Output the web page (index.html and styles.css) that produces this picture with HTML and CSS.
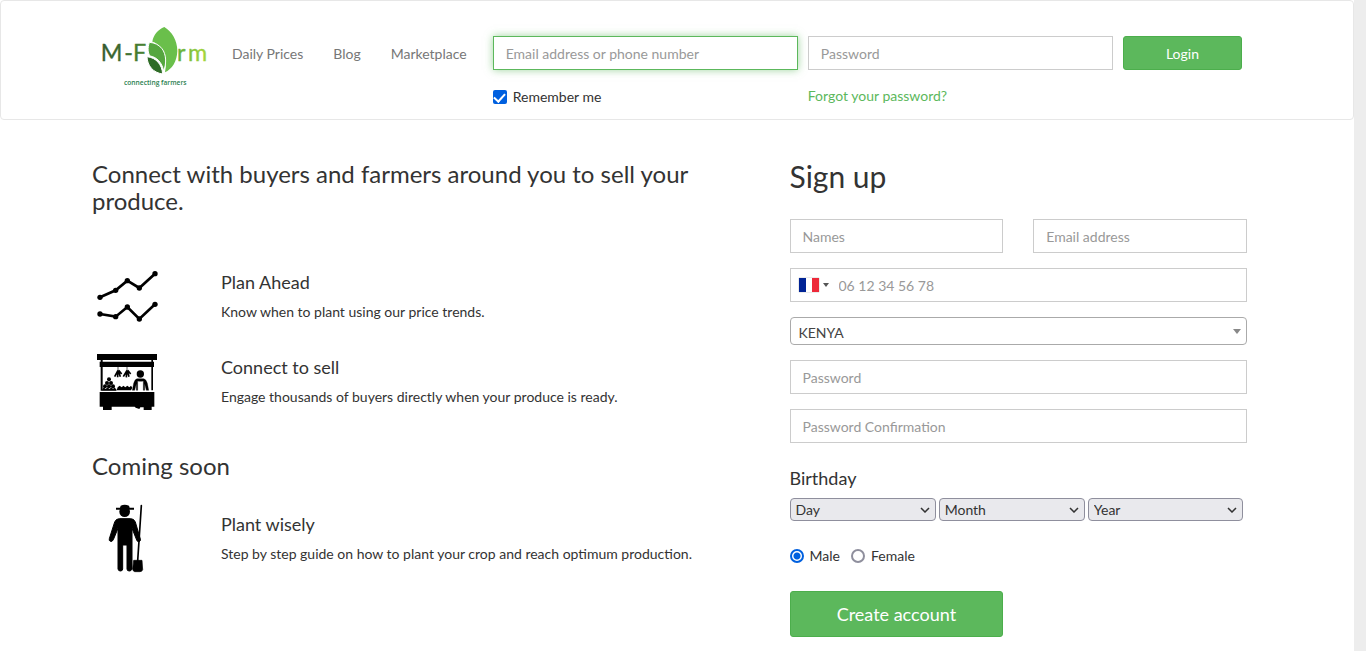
FILE: index.html
```html
<!DOCTYPE html>
<html lang="en">
<head>
    <meta charset="UTF-8">
    <meta name="viewport" content="width=device-width, initial-scale=1.0">
    <title>M-Farm</title>
    <link rel="stylesheet" href="styles.css">
</head>
<body>
    <header class="navbar">
        <div class="container navbar-inner">
            <a class="brand" href="#" aria-label="M-Farm">
                <svg width="130" height="80" viewBox="0 0 390 240">
                    <defs>
                        <linearGradient id="dark" x1="0" x2="1">
                            <stop offset="0" stop-color="#35592f"/>
                            <stop offset="1" stop-color="#4a8432"/>
                        </linearGradient>
                        <linearGradient id="light" x1="0" x2="1">
                            <stop offset="0" stop-color="#5fae3c"/>
                            <stop offset="1" stop-color="#a9d83c"/>
                        </linearGradient>
                    </defs>
                    <text class="logo-text" x="32 103 129" y="138" fill="url(#dark)" stroke="url(#dark)">M-F</text>
                    <text class="logo-text" x="261 294" y="138" fill="url(#light)" stroke="url(#light)">rm</text>
                    <path d="M223 36C204 44 190 60 187 80C206 85 223 105 227 130C229 146 227 160 225 172C246 162 261 140 262 108C262 76 246 50 223 36Z" fill="#6abf4b"/>
                    <path d="M178 82C172 100 174 114 180 123C200 126 216 142 221 168C230 145 229 118 216 101C207 89 193 83 178 82Z" fill="#55a63f" stroke="#fff" stroke-width="3"/>
                    <path d="M171 125C172 152 189 173 218 177C216 149 199 128 171 125Z" fill="#2f6c27" stroke="#fff" stroke-width="3"/>
                    <text class="logo-tagline" x="102" y="209" fill="#2b8050">connecting farmers</text>
                </svg>
            </a>
            <nav class="nav-links">
                <a href="#">Daily Prices</a>
                <a href="#">Blog</a>
                <a href="#">Marketplace</a>
            </nav>
            <form class="login-form">
                <input class="form-control active" type="text" aria-label="Email address or phone number" placeholder="Email address or phone number">
                <input class="form-control" type="password" aria-label="Password" placeholder="Password">
                <button class="btn" type="submit">Login</button>
                <label class="check"><input type="checkbox" checked> Remember me</label>
                <a class="forgot" href="#">Forgot your password?</a>
            </form>
        </div>
    </header>

    <main class="container main">
        <section class="features">
            <h2>Connect with buyers and farmers around you to sell your produce.</h2>
            <div class="feature-list">
                <div class="feature">
                    <svg width="80" height="70" viewBox="21 6 240 210" fill="none" stroke="#000" stroke-width="8">
                        <path d="M45 112L92 91L127 62L163 84L210 41M45 162L92 170L127 141L163 177L210 133"/>
                        <g fill="#000" stroke="none">
                            <circle cx="45" cy="112" r="8"/>
                            <circle cx="92" cy="91" r="8"/>
                            <circle cx="127" cy="62" r="8"/>
                            <circle cx="163" cy="84" r="8"/>
                            <circle cx="210" cy="41" r="8"/>
                            <circle cx="45" cy="162" r="8"/>
                            <circle cx="92" cy="170" r="8"/>
                            <circle cx="127" cy="141" r="8"/>
                            <circle cx="163" cy="177" r="8"/>
                            <circle cx="210" cy="133" r="8"/>
                        </g>
                    </svg>
                    <div>
                        <h4>Plan Ahead</h4>
                        <p>Know when to plant using our price trends.</p>
                    </div>
                </div>
                <div class="feature">
                    <svg width="80" height="75" viewBox="21 -3 240 225">
                        <!-- roof, posts and counter -->
                        <path d="M36 27H216V45H36ZM44 50H207V66H44ZM44 141H208V185H200V195H176V187H166L163 192L152 188L149 185H80V195H54V185H44Z"/>
                        <path d="M47 44H53V136H47ZM199 44H204V136H199ZM47 134H94V137H47Z"/>
                        <!-- fruit -->
                        <circle cx="72" cy="103" r="6"/>
                        <circle cx="66" cy="114" r="6"/>
                        <circle cx="78" cy="114" r="6"/>
                        <circle cx="60" cy="124" r="6"/>
                        <circle cx="72" cy="124" r="6"/>
                        <circle cx="84" cy="124" r="6"/>
                        <path d="M51 136L56 127L62 132L68 127L73 132L80 127L84 132L89 127L95 136ZM95 136L98 127L104 122L110 127L115 122L121 127L127 122L133 127L138 122L142 128L138 136Z"/>
                        <!-- hanging bunches -->
                        <g fill="none" stroke="#000" stroke-width="5">
                            <path d="M99 76L89 95M98 78L98 97M100 78L106 95M101 76L110 87M126 76L115 95M125 78L124 97M127 78L132 95M128 76L137 87"/>
                            <path d="M99 66V80M126 66V80" stroke-width="2"/>
                        </g>
                        <!-- seller -->
                        <circle cx="166" cy="87" r="11"/>
                        <path d="M156 101H176Q184 103 187 115L191 136H184L179 116V136H175V108H158V136H154V116L149 136H142L146 115Q149 103 156 101Z" stroke="#000" stroke-width="1"/>
                        <path d="M160 102H173V109H160Z"/>
                    </svg>
                    <div>
                        <h4>Connect to sell</h4>
                        <p>Engage thousands of buyers directly when your produce is ready.</p>
                    </div>
                </div>
            </div>
            <h2>Coming soon</h2>
            <div class="feature">
                <svg width="78" height="85" viewBox="6 3 234 255">
                    <path d="M90 38L92 32Q104 27 117 32L119 38H132V44H78V38Z"/>
                    <circle cx="104" cy="50" r="16"/>
                    <path d="M88 71H122Q132 71 136 81L151 132Q153 138 147 140Q142 141 140 135L126 100V222Q124 228 118 228Q111 228 111 222V150H98V222Q98 228 91 228Q85 228 84 222V100L70 134Q67 141 61 139Q56 137 58 131L74 81Q78 71 88 71Z" stroke="#000" stroke-width="3"/>
                    <path d="M154 32L143 198" stroke="#000" stroke-width="5" stroke-linecap="round"/>
                    <path d="M131 196H156L158 224Q156 230 150 230H134Q128 228 128 222Z" stroke="#000" stroke-width="2"/>
                </svg>
                <div>
                    <h4>Plant wisely</h4>
                    <p>Step by step guide on how to plant your crop and reach optimum production.</p>
                </div>
            </div>
        </section>

        <section class="signup">
            <h1>Sign up</h1>
            <form class="signup-form">
                <div class="half-row">
                    <input class="form-control" type="text" aria-label="Names" placeholder="Names">
                    <input class="form-control" type="email" aria-label="Email address" placeholder="Email address">
                </div>
                <div class="phone">
                    <span class="flag"></span>
                    <input class="form-control" type="tel" aria-label="Phone number" placeholder="06 12 34 56 78">
                </div>
                <div class="country">
                    <select aria-label="Country">
                        <option>KENYA</option>
                    </select>
                </div>
                <input class="form-control" type="password" aria-label="Password" placeholder="Password">
                <input class="form-control" type="password" aria-label="Password Confirmation" placeholder="Password Confirmation">
                <h4>Birthday</h4>
                <div class="birthday">
                    <div class="date-select">
                        <select aria-label="Day"><option>Day</option></select>
                        <svg width="10" height="6" viewBox="0 0 10 6"><path d="M1 1L5 5L9 1"/></svg>
                    </div>
                    <div class="date-select">
                        <select aria-label="Month"><option>Month</option></select>
                        <svg width="10" height="6" viewBox="0 0 10 6"><path d="M1 1L5 5L9 1"/></svg>
                    </div>
                    <div class="date-select">
                        <select aria-label="Year"><option>Year</option></select>
                        <svg width="10" height="6" viewBox="0 0 10 6"><path d="M1 1L5 5L9 1"/></svg>
                    </div>
                </div>
                <div class="gender">
                    <label><input type="radio" name="gender" checked> Male</label>
                    <label><input type="radio" name="gender"> Female</label>
                </div>
                <button class="btn btn-lg" type="submit">Create account</button>
            </form>
        </section>
    </main>
</body>
</html>
```
FILE: styles.css
```css
* {
    box-sizing: border-box;
}
html {
    background: #ededed;
}
body {
    margin: 0 12px 0 0;
    min-height: 100vh;
    background: #fff;
    color: #333;
    font-family: Lato, sans-serif;
    font-size: 14px;
    line-height: 20px;
    font-kerning: normal;
    text-rendering: optimizeLegibility;
}
h1, h2, h4, p {
    margin: 0;
    font-weight: 400;
}
h1 {
    font-size: 30px;
    line-height: 32px;
}
h2 {
    font-size: 24px;
    line-height: 27px;
}
h4 {
    font-size: 18px;
    line-height: 20px;
}
input, select, button {
    font-family: inherit;
    font-size: 14px;
    font-kerning: inherit;
    margin: 0;
    text-rendering: inherit;
}
a {
    color: #5cb85c;
    text-decoration: none;
}
.container {
    max-width: 1170px;
    margin: 0 auto;
}

/* top bar */
.navbar {
    border: 1px solid #e7e7e7;
    border-radius: 4px;
}
.navbar-inner {
    display: flex;
    align-items: flex-start;
    padding-right: 20px;
}
.brand {
    height: 118px;
    padding-top: 14px;
    margin-right: 12px;
    margin-left: -2px;
}
.logo-text {
    font-size: 70px;
    stroke-width: 1px;
}
.logo-tagline {
    font-family: "Open Sans", sans-serif;
    font-size: 20px;
    font-weight: 600;
}
.nav-links {
    display: flex;
    gap: 30px;
    padding-top: 43px;
}
.nav-links a {
    color: #777;
}
.login-form {
    flex: 1;
    display: grid;
    grid-template-columns: 305fr 305fr 119fr;
    column-gap: 10px;
    row-gap: 16px;
    padding-top: 35px;
    margin-left: 26px;
}
.form-control {
    display: block;
    width: 100%;
    height: 34px;
    padding: 6px 12px;
    border: 1px solid #ccc;
    border-radius: 0;
    background: #fff;
    color: #555;
    outline: none;
}
.form-control::placeholder {
    color: #999;
}
.form-control.active {
    border-color: #5cb85c;
    box-shadow: 0 0 8px rgba(92, 184, 92, 0.6);
}
.btn {
    height: 34px;
    border: 1px solid #4cae4c;
    border-radius: 3px;
    background: #5cb85c;
    color: #fff;
    cursor: pointer;
}
.check {
    display: flex;
    align-items: center;
    gap: 6px;
    padding-top: 1px;
}
.check input {
    appearance: none;
    display: flex;
    justify-content: center;
    width: 14px;
    height: 14px;
    border-radius: 2px;
    background: #0060df;
}
.check input:checked::after {
    content: "";
    width: 5px;
    height: 9px;
    margin-top: 1px;
    border: solid #fff;
    border-width: 0 2px 2px 0;
    transform: rotate(42deg);
}

/* content */
.main {
    display: grid;
    grid-template-columns: 7fr 5fr;
    padding-top: 40px;
}
.feature-list {
    display: grid;
    gap: 12px;
    margin: 48px 0 33px;
}
.feature {
    display: grid;
    grid-template-columns: 129px 1fr;
    align-items: center;
}
.features > .feature {
    margin-top: 17px;
}
.feature h4 {
    margin-bottom: 10px;
}
.signup {
    padding: 0 15px;
}
.signup h1 {
    margin-bottom: 27px;
}
.signup-form {
    display: grid;
    gap: 15px;
}
.half-row {
    display: grid;
    grid-template-columns: 1fr 1fr;
    gap: 30px;
}
.phone {
    position: relative;
}
.phone .form-control {
    padding-left: 48px;
}
.flag {
    position: absolute;
    left: 9px;
    top: 10px;
    width: 20px;
    height: 14px;
    background: linear-gradient(90deg, #002395 35%, #fff 35%, #fff 65%, #ed2939 65%);
    box-shadow: 0 0 1px #888;
}
.flag::after, .country::after {
    content: "";
    position: absolute;
    border: solid transparent;
    border-width: 4px 3px 0;
    border-top-color: #555;
}
.flag::after {
    left: 24px;
    top: 5px;
}
.country {
    position: relative;
}
.country::after {
    right: 6px;
    top: 12px;
    border-width: 5px 4px 0;
    border-top-color: #888;
}
.country select {
    display: block;
    appearance: none;
    width: 100%;
    height: 28px;
    padding: 2px 8px 0;
    border: 1px solid #aaa;
    border-radius: 4px;
    background: #fff;
    color: #444;
}
.signup-form h4 {
    margin-top: 10px;
}
.birthday {
    display: grid;
    grid-template-columns: 146fr 146fr 155fr;
    gap: 3px;
    margin-top: -5px;
    padding-right: 4px;
}
.date-select {
    position: relative;
}
.date-select select {
    display: block;
    appearance: none;
    width: 100%;
    height: 23px;
    padding: 0 5px;
    border: 1px solid #8f8f9d;
    border-radius: 4px;
    background: #e9e9ed;
    color: #333;
}
.date-select svg {
    position: absolute;
    right: 6px;
    top: 9px;
    fill: none;
    stroke: #333;
    stroke-width: 1.5;
    pointer-events: none;
}
.gender {
    display: flex;
    gap: 11px;
    margin: 10px 0;
}
.gender label {
    display: flex;
    align-items: center;
    gap: 6px;
}
.gender input {
    appearance: none;
    width: 14px;
    height: 14px;
    border: 2px solid #8f8f9d;
    border-radius: 50%;
}
.gender input:checked {
    border-color: #0060df;
    background: radial-gradient(#0060df 3px, #fff 4px);
}
.btn-lg {
    width: calc(50% - 15px);
    height: 46px;
    font-size: 18px;
}
```
